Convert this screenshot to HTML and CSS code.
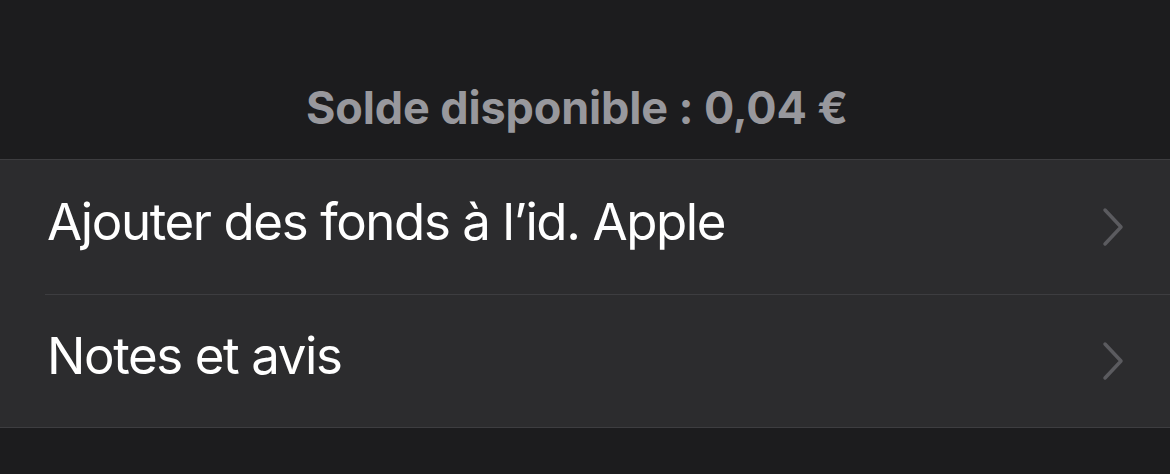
FILE: index.html
```html
<!DOCTYPE html>
<html lang="fr">
<head>
<meta charset="utf-8">
<link rel="stylesheet" href="styles.css">
</head>
<body>
<div class="header"><span class="balance">Solde disponible : 0,04 €</span></div>
<div class="list">
  <div class="row">
    <div class="row-inner">
      <span class="label">Ajouter des fonds à l’id. Apple</span>
      <svg class="chev" width="24" height="40" viewBox="0 0 24 40"><path d="M4 3 L20 20 L4 37" fill="none" stroke="#5b5b5f" stroke-width="3.5" stroke-linecap="round" stroke-linejoin="round"/></svg>
    </div>
  </div>
  <div class="row">
    <div class="row-inner last">
      <span class="label">Notes et avis</span>
      <svg class="chev" width="24" height="40" viewBox="0 0 24 40"><path d="M4 3 L20 20 L4 37" fill="none" stroke="#5b5b5f" stroke-width="3.5" stroke-linecap="round" stroke-linejoin="round"/></svg>
    </div>
  </div>
</div>
</body>
</html>
```
FILE: styles.css
```css
html, body {
  margin: 0;
  padding: 0;
  background: #1c1c1e;
  width: 1170px;
  height: 474px;
  overflow: hidden;
  font-family: Inter, "Liberation Sans", sans-serif;
}
.header {
  height: 159px;
  display: flex;
  justify-content: center;
  align-items: flex-end;
  box-sizing: border-box;
  padding-bottom: 29px;
  padding-right: 16px;
}
.balance {
  color: #98989d;
  font-size: 45px;
  font-weight: 700;
  line-height: 1;
  letter-spacing: -0.15px;
}
.list {
  background: #2c2c2e;
  border-top: 1px solid #3d3d40;
  border-bottom: 1px solid #3d3d40;
}
.row {
  padding-left: 45px;
}
.row-inner {
  height: 135px;
  display: flex;
  align-items: center;
  justify-content: space-between;
  padding-right: 45px;
  border-bottom: 1px solid #3d3d40;
  box-sizing: border-box;
}
.row-inner.last {
  border-bottom: none;
  height: 132px;
}
.label {
  color: #ffffff;
  font-size: 51px;
  font-weight: 400;
  letter-spacing: -1.4px;
  margin-left: 2px;
  padding-bottom: 12px;
}
.chev {
  display: block;
}
```
